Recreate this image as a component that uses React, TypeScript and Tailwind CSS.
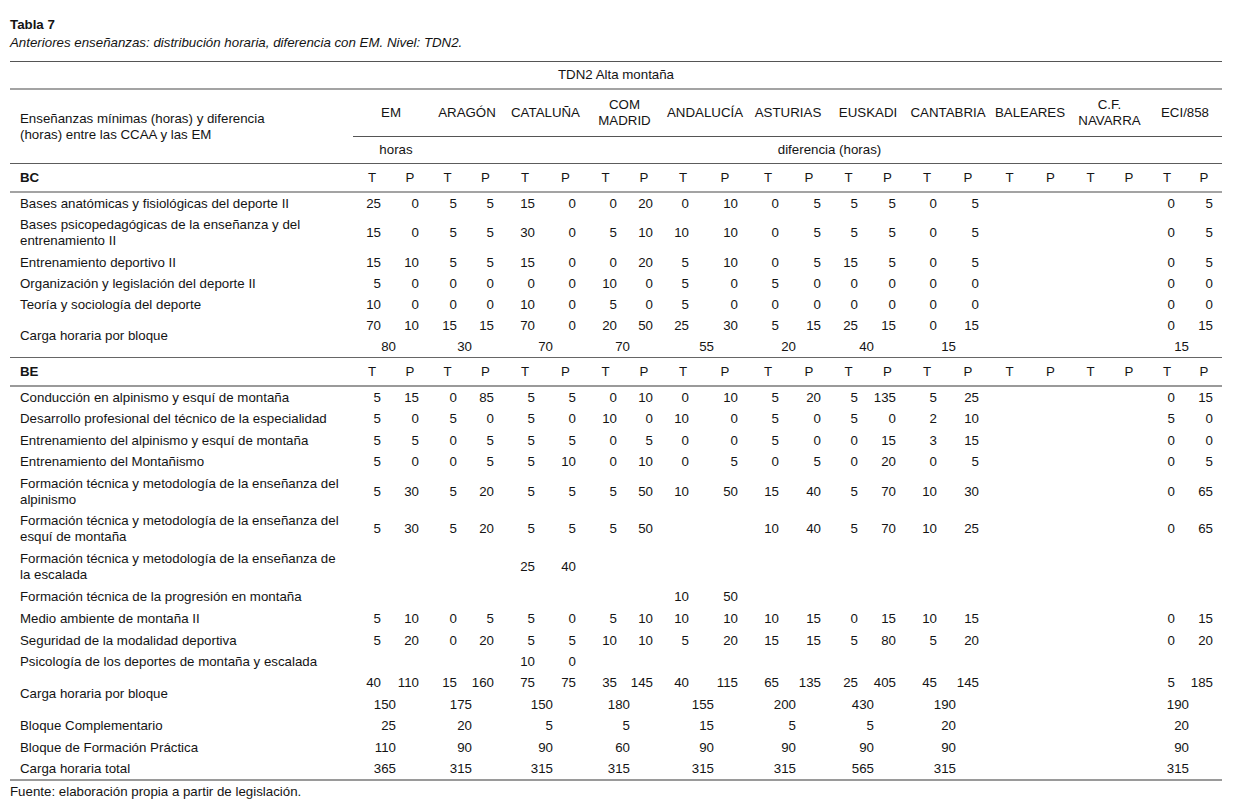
import React from "react";

const PR = [
  "pr-[10px]", "pr-[10px]", "pr-[9px]", "pr-[11px]", "pr-[10px]", "pr-[10px]",
  "pr-[8px]", "pr-[10px]", "pr-[14px]", "pr-[9px]", "pr-[10px]", "pr-[8px]",
  "pr-[10px]", "pr-[11px]", "pr-[10px]", "pr-[10px]", "pr-[10px]", "pr-[10px]",
  "pr-[10px]", "pr-[10px]", "pr-[11px]", "pr-[9px]",
];

const GROUPS: string[][] = [
  ["EM"], ["ARAGÓN"], ["CATALUÑA"], ["COM", "MADRID"], ["ANDALUCÍA"], ["ASTURIAS"],
  ["EUSKADI"], ["CANTABRIA"], ["BALEARES"], ["C.F.", "NAVARRA"], ["ECI/858"],
];

function pairs(s: string): string[] {
  const out: string[] = [];
  s.split("|").forEach((g) => {
    const t = g.trim();
    if (t === "-" || t === "") {
      out.push("", "");
    } else {
      const [a, b] = t.split(/\s+/);
      out.push(a ?? "", b ?? "");
    }
  });
  return out;
}

function singles(s: string): string[] {
  return s.split("|").map((x) => (x.trim() === "-" ? "" : x.trim()));
}

type RowDef = { label: string[]; vals: string; h: string };

const BC_ROWS: RowDef[] = [
  { label: ["Bases anatómicas y fisiológicas del deporte II"], vals: "25 0|5 5|15 0|0 20|0 10|0 5|5 5|0 5|-|-|0 5", h: "h-[21px]" },
  { label: ["Bases psicopedagógicas de la enseñanza y del", "entrenamiento II"], vals: "15 0|5 5|30 0|5 10|10 10|0 5|5 5|0 5|-|-|0 5", h: "h-[38px]" },
  { label: ["Entrenamiento deportivo II"], vals: "15 10|5 5|15 0|0 20|5 10|0 5|15 5|0 5|-|-|0 5", h: "h-[21px]" },
  { label: ["Organización y legislación del deporte II"], vals: "5 0|0 0|0 0|10 0|5 0|5 0|0 0|0 0|-|-|0 0", h: "h-[21px]" },
  { label: ["Teoría y sociología del deporte"], vals: "10 0|0 0|10 0|5 0|5 0|0 0|0 0|0 0|-|-|0 0", h: "h-[21px]" },
];

const BE_ROWS: RowDef[] = [
  { label: ["Conducción en alpinismo y esquí de montaña"], vals: "5 15|0 85|5 5|0 10|0 10|5 20|5 135|5 25|-|-|0 15", h: "h-[21px]" },
  { label: ["Desarrollo profesional del técnico de la especialidad"], vals: "5 0|5 0|5 0|10 0|10 0|5 0|5 0|2 10|-|-|5 0", h: "h-[22px]" },
  { label: ["Entrenamiento del alpinismo y esquí de montaña"], vals: "5 5|0 5|5 5|0 5|0 0|5 0|0 15|3 15|-|-|0 0", h: "h-[21px]" },
  { label: ["Entrenamiento del Montañismo"], vals: "5 0|0 5|5 10|0 10|0 5|0 5|0 20|0 5|-|-|0 5", h: "h-[22px]" },
  { label: ["Formación técnica y metodología de la enseñanza del", "alpinismo"], vals: "5 30|5 20|5 5|5 50|10 50|15 40|5 70|10 30|-|-|0 65", h: "h-[37px]" },
  { label: ["Formación técnica y metodología de la enseñanza del", "esquí de montaña"], vals: "5 30|5 20|5 5|5 50|-|10 40|5 70|10 25|-|-|0 65", h: "h-[38px]" },
  { label: ["Formación técnica y metodología de la enseñanza de", "la escalada"], vals: "-|-|25 40|-|-|-|-|-|-|-|-", h: "h-[38px]" },
  { label: ["Formación técnica de la progresión en montaña"], vals: "-|-|-|-|10 50|-|-|-|-|-|-", h: "h-[22px]" },
  { label: ["Medio ambiente de montaña II"], vals: "5 10|0 5|5 0|5 10|10 10|10 15|0 15|10 15|-|-|0 15", h: "h-[22px]" },
  { label: ["Seguridad de la modalidad deportiva"], vals: "5 20|0 20|5 5|10 10|5 20|15 15|5 80|5 20|-|-|0 20", h: "h-[21px]" },
  { label: ["Psicología de los deportes de montaña y escalada"], vals: "-|-|10 0|-|-|-|-|-|-|-|-", h: "h-[21px]" },
];

function Label({ lines, className = "" }: { lines: string[]; className?: string }) {
  return (
    <div className={"flex flex-col justify-center pl-[10px] whitespace-nowrap " + className}>
      {lines.map((l, i) => (
        <div key={i}>{l}</div>
      ))}
    </div>
  );
}

function ValueCells({ vals, h }: { vals: string[]; h: string }) {
  return (
    <>
      {vals.map((v, i) => (
        <div key={i} className={"flex items-center justify-end " + h + " " + PR[i]}>
          {v}
        </div>
      ))}
    </>
  );
}

function TotalCells({ vals, h }: { vals: string[]; h: string }) {
  return (
    <>
      {vals.map((v, i) => (
        <div key={i} className={"col-span-2 flex items-center justify-end pr-[33px] " + h}>
          {v}
        </div>
      ))}
    </>
  );
}

function DataRow({ r }: { r: RowDef }) {
  return (
    <>
      <Label lines={r.label} className={r.h} />
      <ValueCells vals={pairs(r.vals)} h={r.h} />
    </>
  );
}

function TPRow({ title }: { title: string }) {
  const cells: string[] = [];
  for (let i = 0; i < 11; i++) cells.push("T", "P");
  return (
    <>
      <div className="flex items-center pl-[10px] font-bold h-[27px]">{title}</div>
      {cells.map((c, i) => (
        <div key={i} className="flex items-center justify-center h-[27px]">
          {c}
        </div>
      ))}
    </>
  );
}

function CargaRow({ vals, totals, h1, h2 }: { vals: string; totals: string; h1: string; h2: string }) {
  return (
    <>
      <div className="row-span-2 flex items-center pl-[10px] whitespace-nowrap">Carga horaria por bloque</div>
      <ValueCells vals={pairs(vals)} h={h1} />
      <TotalCells vals={singles(totals)} h={h2} />
    </>
  );
}

function SumRow({ label, totals, h }: { label: string; totals: string; h: string }) {
  return (
    <>
      <Label lines={[label]} className={h} />
      <TotalCells vals={singles(totals)} h={h} />
    </>
  );
}

export default function App() {
  return (
    <div className="w-[1237px] h-[808px] bg-white pl-[10px] pt-[16px] text-[13.3px] leading-[16px] text-[#141414] font-['Liberation_Sans','Arial',sans-serif]">
      <div className="font-bold leading-[18px]">Tabla 7</div>
      <div className="italic leading-[18px]">
        Anteriores enseñanzas: distribución horaria, diferencia con EM. Nivel: TDN2.
      </div>

      <div className="mt-[9px] grid w-[1212px] grid-cols-[343px_38px_38px_37px_39px_40px_41px_39px_38px_40px_44px_42px_40px_39px_39px_40px_42px_41px_41px_39px_38px_38px_36px]">
        <div className="col-span-full h-px bg-[#555555]" />
        <div className="col-span-full flex h-[26px] items-center justify-center">TDN2 Alta montaña</div>
        <div className="col-span-full h-[2px] bg-[#a3a3a3]" />

        <div className="row-span-3 flex flex-col justify-center pl-[10px] whitespace-nowrap">
          <div>Enseñanzas mínimas (horas) y diferencia</div>
          <div>(horas) entre las CCAA y las EM</div>
        </div>
        {GROUPS.map((g, i) => (
          <div key={i} className="col-span-2 flex h-[46px] flex-col items-center justify-center text-center">
            {g.map((l, j) => (
              <div key={j}>{l}</div>
            ))}
          </div>
        ))}
        <div className="col-[2/-1] h-px bg-[#555555]" />
        <div className="col-span-2 flex h-[26px] items-center justify-center pl-[10px]">horas</div>
        <div className="col-span-20 flex h-[26px] items-center justify-center pl-[8px]">diferencia (horas)</div>
        <div className="col-span-full h-px bg-[#5c5c5c]" />

        <TPRow title="BC" />
        <div className="col-span-full h-[2px] bg-[#a3a3a3]" />
        {BC_ROWS.map((r, i) => (
          <DataRow key={i} r={r} />
        ))}
        <CargaRow
          vals="70 10|15 15|70 0|20 50|25 30|5 15|25 15|0 15|-|-|0 15"
          totals="80|30|70|70|55|20|40|15|-|-|15"
          h1="h-[21px]"
          h2="h-[21px]"
        />
        <div className="col-span-full h-px bg-[#666666]" />

        <TPRow title="BE" />
        <div className="col-span-full h-[2px] bg-[#9a9a9a]" />
        {BE_ROWS.map((r, i) => (
          <DataRow key={i} r={r} />
        ))}
        <CargaRow
          vals="40 110|15 160|75 75|35 145|40 115|65 135|25 405|45 145|-|-|5 185"
          totals="150|175|150|180|155|200|430|190|-|-|190"
          h1="h-[22px]"
          h2="h-[21px]"
        />
        <SumRow label="Bloque Complementario" totals="25|20|5|5|15|5|5|20|-|-|20" h="h-[22px]" />
        <SumRow label="Bloque de Formación Práctica" totals="110|90|90|60|90|90|90|90|-|-|90" h="h-[21px]" />
        <SumRow label="Carga horaria total" totals="365|315|315|315|315|315|565|315|-|-|315" h="h-[21px]" />
        <div className="col-span-full h-[2px] bg-[#9a9a9a]" />
      </div>

      <div className="mt-[3px]">Fuente: elaboración propia a partir de legislación.</div>
    </div>
  );
}
